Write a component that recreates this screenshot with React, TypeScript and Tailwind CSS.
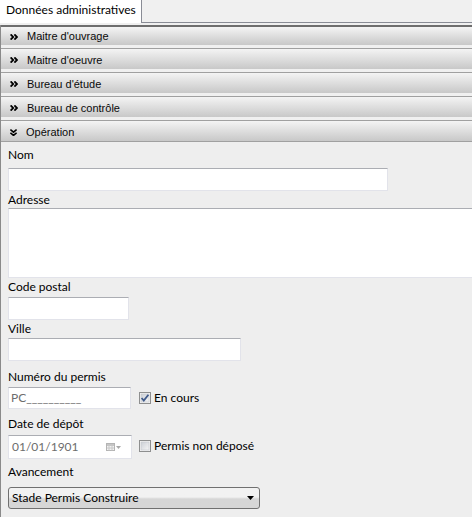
import React from 'react';

const sections = ["Maitre d'ouvrage", "Maitre d'oeuvre", "Bureau d'étude", 'Bureau de contrôle'];

function ChevronsRight() {
  return (
    <svg width="8" height="6" viewBox="0 0 8 6" className="shrink-0">
      <path d="M0.6 0.4 L3.2 3 L0.6 5.6 M4.4 0.4 L7 3 L4.4 5.6" fill="none" stroke="#000" strokeWidth="1.8" />
    </svg>
  );
}

function ChevronsDown() {
  return (
    <svg width="7" height="7" viewBox="0 0 7 7" className="shrink-0">
      <path d="M0.4 0.6 L3.5 3.2 L6.6 0.6 M0.4 3.8 L3.5 6.4 L6.6 3.8" fill="none" stroke="#000" strokeWidth="1.6" />
    </svg>
  );
}

function Header({ label, open, first }: { label: string; open?: boolean; first?: boolean }) {
  return (
    <div className={first ? 'border-t-2 border-[#6e6e6e]' : 'border-t border-[#a0a0a0]'}>
      <div
        className={`flex items-center pl-[9px] bg-gradient-to-b from-[#f4f4f4] to-[#c8c8c8] ${
          first ? 'h-[18px] pt-[1px]' : 'h-[20px] pt-[2px]'
        }`}
      >
        {open ? <ChevronsDown /> : <ChevronsRight />}
        <span className="ml-[9px] text-[11px] leading-[13px] text-[#0a0a0a] font-['Liberation_Sans',Arial,sans-serif]">
          {label}
        </span>
      </div>
    </div>
  );
}

function Label({ children, className = '' }: { children: React.ReactNode; className?: string }) {
  return <div className={`text-[12px] leading-[16px] text-black ${className}`}>{children}</div>;
}

function TextBox({ className = '', children }: { className?: string; children?: React.ReactNode }) {
  return (
    <div
      className={`bg-white border border-[#e2e3ea] border-t-[#abadb3] flex items-center pl-[2px] text-[12px] text-[#6d6d6d] ${className}`}
    >
      {children}
    </div>
  );
}

function CheckBox({ checked }: { checked?: boolean }) {
  return (
    <svg width="12" height="12" viewBox="0 0 12 12" className="shrink-0">
      <defs>
        <linearGradient id="cbg" x1="0" y1="0" x2="1" y2="1">
          <stop offset="0" stopColor="#cbcfd5" />
          <stop offset="1" stopColor="#f6f6f6" />
        </linearGradient>
      </defs>
      <rect x="0.5" y="0.5" width="11" height="11" fill="#f4f4f4" stroke="#8e8f8f" />
      <rect x="2" y="2" width="8" height="8" fill="url(#cbg)" stroke="#c3c6cb" strokeWidth="0.6" />
      {checked && <path d="M2.6 6 L4.8 8.6 L9.4 2.8" fill="none" stroke="#3f5a8a" strokeWidth="1.8" />}
    </svg>
  );
}

export default function App() {
  return (
    <div className="w-[472px] h-[517px] overflow-hidden bg-[#f0f0f0] font-['Lato','Noto_Sans',sans-serif]">
      <div className="flex h-[23px]">
        <div className="w-[142px] bg-white border-r border-[#898c95] pl-[6px] pt-[2px] text-[12px] leading-[16px] text-black">
          Données administratives
        </div>
        <div className="flex-1 border-b border-[#898c95]" />
      </div>
      <div className="h-[2px]" />
      <div className="border-l border-[#8a8a8a]">
        {sections.map((s, i) => (
          <div key={s} className="pb-[3px]">
            <Header label={s} first={i === 0} />
          </div>
        ))}
        <Header label="Opération" open />
        <div className="border-t border-[#a0a0a0] bg-[#eeeeee] pl-[7px] h-[400px]">
          <Label className="pt-[5px]">Nom</Label>
          <TextBox className="mt-[5px] w-[380px] h-[23px]" />
          <Label className="mt-[1px]">Adresse</Label>
          <TextBox className="w-[480px] h-[70px]" />
          <Label className="mt-[1px]">Code postal</Label>
          <TextBox className="mt-[2px] w-[121px] h-[23px]" />
          <Label className="mt-[1px]">Ville</Label>
          <TextBox className="mt-[1px] w-[233px] h-[23px]" />
          <Label className="mt-[8px]">Numéro du permis</Label>
          <div className="mt-[2px] flex items-center">
            <TextBox className="w-[123px] h-[22px]">PC__________</TextBox>
            <div className="ml-[8px] flex items-center">
              <CheckBox checked />
              <span className="ml-[3px] text-[12px] leading-[16px] text-black">En cours</span>
            </div>
          </div>
          <Label className="mt-[7px]">Date de dépôt</Label>
          <div className="mt-[3px] flex items-center">
            <TextBox className="w-[124px] h-[24px] justify-between pr-[10px]">
              <span className="pl-[1px]">01/01/1901</span>
              <span className="flex items-center gap-[1px]">
                <svg width="9" height="8" viewBox="0 0 9 8">
                  <rect x="0.5" y="0.5" width="8" height="7" fill="#f2f2f2" stroke="#b4b4b4" />
                  <rect x="1" y="1" width="7" height="2" fill="#c6c6c6" />
                  <path d="M3 3 V7.5 M6 3 V7.5 M1 5 H8" stroke="#c8c8c8" strokeWidth="1" />
                </svg>
                <svg width="5" height="3" viewBox="0 0 5 3">
                  <path d="M0 0 H5 L2.5 3 Z" fill="#a8a8a8" />
                </svg>
              </span>
            </TextBox>
            <div className="ml-[7px] flex items-center -mt-[3px]">
              <CheckBox />
              <span className="ml-[3px] text-[12px] leading-[16px] text-black">Permis non déposé</span>
            </div>
          </div>
          <Label className="mt-[5px]">Avancement</Label>
          <div className="mt-[7px] w-[252px] h-[22px] rounded-[3px] border border-[#707070] bg-gradient-to-b from-[#f2f2f2] from-45% to-[#d6d6d6] to-55% flex items-center justify-between pl-[3px] pr-[5px] text-[12px] text-black">
            <span>Stade Permis Construire</span>
            <svg width="7" height="4" viewBox="0 0 7 4">
              <path d="M0 0 H7 L3.5 4 Z" fill="#000" />
            </svg>
          </div>
        </div>
      </div>
    </div>
  );
}
